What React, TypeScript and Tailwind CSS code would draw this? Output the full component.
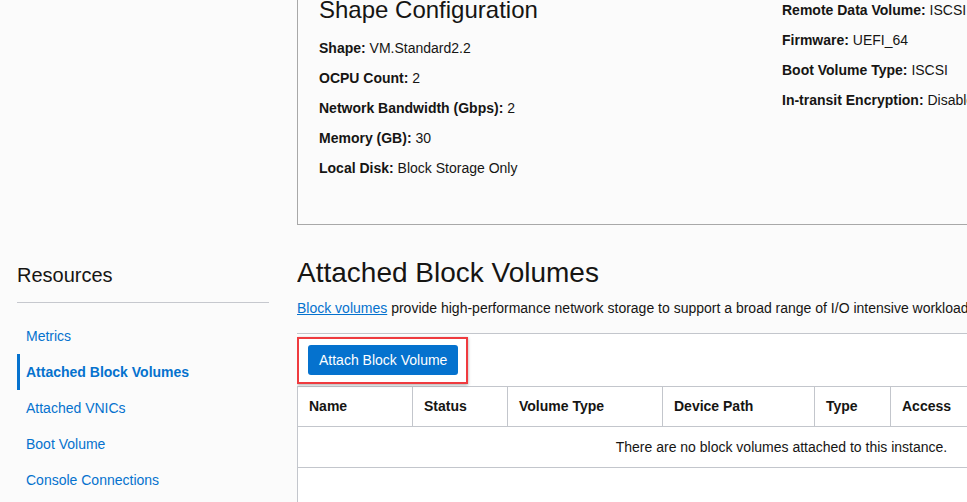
import React from "react";

const leftDetails = [
  ["Shape:", "VM.Standard2.2"],
  ["OCPU Count:", "2"],
  ["Network Bandwidth (Gbps):", "2"],
  ["Memory (GB):", "30"],
  ["Local Disk:", "Block Storage Only"],
];

const rightDetails = [
  ["Remote Data Volume:", "ISCSI"],
  ["Firmware:", "UEFI_64"],
  ["Boot Volume Type:", "ISCSI"],
  ["In-transit Encryption:", "Disabled"],
];

const resources = ["Metrics", "Attached Block Volumes", "Attached VNICs", "Boot Volume", "Console Connections"];

const columns = [
  { label: "Name", w: "w-[115px]" },
  { label: "Status", w: "w-[95px]" },
  { label: "Volume Type", w: "w-[155px]" },
  { label: "Device Path", w: "w-[152px]" },
  { label: "Type", w: "w-[76px]" },
  { label: "Access", w: "w-[375px]" },
];

function Detail({ label, value }: { label: string; value: string }) {
  return (
    <p className="text-[14px] leading-[20px] whitespace-nowrap text-[#161513]">
      <span className="font-bold">{label}</span> {value}
    </p>
  );
}

export default function App() {
  return (
    <div className="w-[967px] h-[502px] overflow-hidden bg-[#fbfbfb] flex font-['Liberation_Sans',Arial,sans-serif] text-[#161513]">
      {/* sidebar */}
      <div className="w-[297px] shrink-0 pl-[17px] pr-[28px] pt-[262px]">
        <h2 className="text-[20px] leading-[26px] pb-[14px] border-b border-[#c6c8ce]">Resources</h2>
        <ul className="mt-[15px]">
          {resources.map((r) => (
            <li
              key={r}
              className={
                r === "Attached Block Volumes"
                  ? "border-l-[3px] border-[#0572ce] pl-[6px] py-[8px] text-[14px] leading-[20px] font-bold text-[#0572ce]"
                  : "pl-[9px] py-[8px] text-[14px] leading-[20px] text-[#0572ce]"
              }
            >
              {r}
            </li>
          ))}
        </ul>
      </div>

      {/* main */}
      <div className="flex-1 min-w-0 overflow-hidden">
        <div className="border-l border-b border-[#a8a8a8] w-[900px] pl-[21px] pb-[46px] flex">
          <div className="w-[463px] shrink-0">
            <h2 className="text-[24px] leading-[28px] mt-[-4px]">Shape Configuration</h2>
            <div className="mt-[14px] flex flex-col gap-[10px]">
              {leftDetails.map(([l, v]) => (
                <Detail key={l} label={l} value={v} />
              ))}
            </div>
          </div>
          <div className="flex flex-col gap-[10px]">
            {rightDetails.map(([l, v]) => (
              <Detail key={l} label={l} value={v} />
            ))}
          </div>
        </div>

        <h1 className="mt-[31px] text-[28px] leading-[34px] whitespace-nowrap">Attached Block Volumes</h1>
        <p className="mt-[8px] text-[14px] leading-[20px] whitespace-nowrap">
          <a className="text-[#0572ce] underline">Block volumes</a> provide high-performance network storage to support a
          broad range of I/O intensive workloads.
        </p>

        <div className="mt-[15px] w-[968px] border-t border-[#c3c6cc] bg-white h-[200px]">
          <div className="px-[11px] py-[11px]">
            <div className="relative inline-block">
              <button className="h-[30px] px-[11px] rounded-[3px] bg-[#0572ce] text-white text-[14px] leading-[30px]">
                Attach Block Volume
              </button>
              <div className="absolute left-[-11px] top-[-8px] w-[171px] h-[47px] border-2 border-[#ef3b3f] shadow-[0_1px_3px_rgba(0,0,0,0.35)]" />
            </div>
          </div>
          <table className="table-fixed w-[968px] border-collapse">
            <thead>
              <tr className="h-[40px]">
                {columns.map((c) => (
                  <th
                    key={c.label}
                    className={`${c.w} border border-[#c3c6cc] px-[11px] text-left text-[14px] font-bold`}
                  >
                    {c.label}
                  </th>
                ))}
              </tr>
            </thead>
            <tbody>
              <tr className="h-[41px]">
                <td colSpan={6} className="border border-[#c3c6cc] text-center text-[14px]">
                  There are no block volumes attached to this instance.
                </td>
              </tr>
            </tbody>
          </table>
          <div className="border-l border-[#c3c6cc] h-[60px]" />
        </div>
      </div>
    </div>
  );
}
